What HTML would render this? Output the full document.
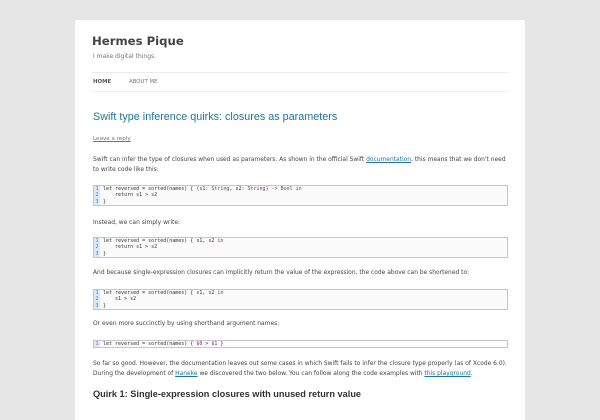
<!DOCTYPE html>
<html><head><meta charset="utf-8"><style>
body{margin:0;width:600px;height:400px;background:#e6e6e6;overflow:hidden;font-family:"DejaVu Sans","Liberation Sans",sans-serif;}
#p{position:absolute;left:75px;top:20px;width:450px;height:400px;background:#fff;}
.a{position:absolute;white-space:nowrap;}
.t{font-size:5.95px;color:#444;}
.code{position:absolute;left:93px;width:413px;border:1px solid #c6c6c6;background:#fbfbfb;font-family:"DejaVu Sans Mono","Liberation Mono",monospace;font-size:5px;line-height:6.3px;color:#333;}
.code div{position:relative;padding-left:9px;height:6.3px;white-space:pre;}
.code div span.n{position:absolute;left:0;top:0;width:6px;height:6.3px;background:#dbe8f8;color:#4a7fc0;text-align:center;}
.k{color:#7a2a8a}
u{color:#21759b;}
</style></head><body>
<div id="p"></div>
<div class="a" style="left:92px;top:34px;font-size:11.7px;font-weight:bold;color:#444">Hermes Pique</div>
<div class="a" style="left:93px;top:53px;font-size:6px;color:#777">I make digital things.</div>
<div style="position:absolute;left:92px;top:72px;width:416px;border-top:1px solid #ededed"></div>
<div class="a" style="left:93px;top:79px;font-size:5.4px;color:#555;font-weight:bold">HOME</div>
<div class="a" style="left:129px;top:79px;font-size:5.4px;color:#777">ABOUT ME</div>
<div style="position:absolute;left:92px;top:91px;width:416px;border-top:1px solid #ededed"></div>
<div class="a" style="left:93px;top:111px;font-size:10.8px;color:#21759b;font-family:'Liberation Sans',sans-serif">Swift type inference quirks: closures as parameters</div>
<div class="a" style="left:93px;top:136px;font-size:5.6px;color:#777;text-decoration:underline">Leave a reply</div>
<div class="a t" style="left:93px;top:156px">Swift can infer the type of closures when used as parameters. As shown in the official Swift <u>documentation</u>, this means that we don't need</div>
<div class="a t" style="left:93px;top:166px">to write code like this:</div>
<div class="code" style="top:185px"><div><span class="n">1</span>let reversed = sorted(names) { (s1: <span class="k">String</span>, s2: <span class="k">String</span>) -&gt; <span class="k">Bool in</span></div><div><span class="n">2</span>    return s1 &gt; s2</div><div><span class="n">3</span>}</div></div>
<div class="a t" style="left:93px;top:219px">Instead, we can simply write:</div>
<div class="code" style="top:237px"><div><span class="n">1</span>let reversed = sorted(names) { s1, s2 <span class="k">in</span></div><div><span class="n">2</span>    return s1 &gt; s2</div><div><span class="n">3</span>}</div></div>
<div class="a t" style="left:93px;top:269px">And because single-expression closures can implicitly return the value of the expression, the code above can be shortened to:</div>
<div class="code" style="top:289px"><div><span class="n">1</span>let reversed = sorted(names) { s1, s2 <span class="k">in</span></div><div><span class="n">2</span>    s1 &gt; s2</div><div><span class="n">3</span>}</div></div>
<div class="a t" style="left:93px;top:320px">Or even more succinctly by using shorthand argument names:</div>
<div class="code" style="top:340px"><div><span class="n">1</span>let reversed = sorted(names) { <span class="k">$0</span> &gt; <span class="k">$1</span> }</div></div>
<div class="a t" style="left:93px;top:360px">So far so good. However, the documentation leaves out some cases in which Swift fails to infer the closure type properly (as of Xcode 6.0).</div>
<div class="a t" style="left:93px;top:370px">During the development of <u>Haneke</u> we discovered the two below. You can follow along the code examples with <u>this playground</u>.</div>
<div class="a" style="left:93px;top:389px;font-size:9.2px;font-weight:bold;color:#333;font-family:'Liberation Sans',sans-serif">Quirk 1: Single-expression closures with unused return value</div>
</body></html>
